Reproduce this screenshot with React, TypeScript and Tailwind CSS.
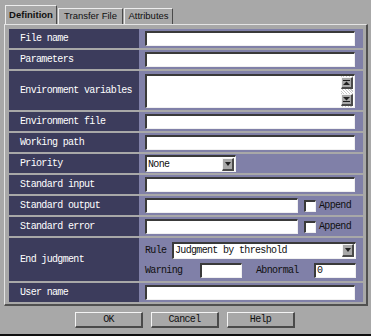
import React from 'react';

const mono = "font-['Liberation_Mono','DejaVu_Sans_Mono',monospace] text-[10px] tracking-[-0.67px]";

const sunken = 'border-t-2 border-l-2 border-t-[#3a3a3a] border-l-[#3a3a3a] border-b border-r border-b-[#f0f0f0] border-r-[#f0f0f0] bg-white';
const raised = 'border-t border-l border-t-[#f4f4f4] border-l-[#f4f4f4] border-b-2 border-r-2 border-b-[#4a4a4a] border-r-[#4a4a4a] bg-[#a8a8a8]';

const Label: React.FC<{ text: string }> = ({ text }) => (
  <div className={`w-[130px] shrink-0 bg-[#3c3c5c] flex items-center pl-[11px] text-white ${mono}`}>
    {text}
  </div>
);

const Row: React.FC<{ label: string; h?: string; children: React.ReactNode }> = ({ label, h = 'h-[19px]', children }) => (
  <div className={`flex ${h}`}>
    <Label text={label} />
    <div className="flex-1 bg-[#8080a8] flex items-center pl-[6px] pr-[8px]">{children}</div>
  </div>
);

const Input: React.FC<{ w?: string; value?: string }> = ({ w = 'flex-1', value }) => (
  <div className={`${w} h-[15px] ${sunken} flex items-center pl-[1px] text-[#101010] ${mono}`}>{value}</div>
);

const Select: React.FC<{ w: string; value: string }> = ({ w, value }) => (
  <div className={`${w} h-[17px] ${sunken} flex items-center justify-between pl-[1px] pr-[1px] text-[#101010] ${mono}`}>
    <span>{value}</span>
    <div className={`w-[12px] h-[13px] ${raised} flex items-center justify-center`}>
      <svg width="6" height="4" viewBox="0 0 6 4">
        <polygon points="0,0 6,0 3,4" fill="#202020" />
      </svg>
    </div>
  </div>
);

const Checkbox = () => <div className={`w-[12px] h-[12px] ml-[6px] ${sunken}`} />;

const Dark: React.FC<{ className?: string; children: React.ReactNode }> = ({ className = '', children }) => (
  <span className={`${className} text-[#101010] ${mono}`}>{children}</span>
);

export default function App() {
  const tabText = "font-['Liberation_Sans',Arial,sans-serif] text-[9.5px] text-[#101010]";
  const tabBorder = 'border-t border-l border-[#ececec] border-r border-r-[#4a4a4a]';
  return (
    <div className="w-[371px] h-[336px] bg-[#a8a8a8] border-b-2 border-[#101010] flex flex-col overflow-hidden">
      <div className="flex items-end pl-[5px] pt-[5px] h-[24px]">
        <div className={`w-[52px] h-[19px] ${tabBorder} flex items-center justify-center font-bold ${tabText}`}>
          Definition
        </div>
        <div className={`w-[65px] h-[16px] ml-[1px] ${tabBorder} flex items-center justify-center ${tabText}`}>
          Transfer File
        </div>
        <div className={`w-[49px] h-[16px] ml-[1px] ${tabBorder} flex items-center justify-center ${tabText}`}>
          Attributes
        </div>
      </div>
      <div className="mx-[4px] w-[364px] h-[282px] border-t border-l border-[#e4e4e4] border-r-2 border-b-2 border-r-[#505050] border-b-[#505050] pt-[4px] pl-[4px] pr-[3px] flex flex-col gap-[2px]">
        <Row label="File name"><Input /></Row>
        <Row label="Parameters"><Input /></Row>
        <Row label="Environment variables" h="h-[39px]">
          <div className={`flex-1 h-[34px] ${sunken} flex justify-end pr-[1px]`}>
            <div className="w-[12px] flex flex-col justify-between py-[1px] bg-[repeating-linear-gradient(45deg,#ffffff_0px,#ffffff_1px,#c8c8c8_1px,#c8c8c8_2px)]">
              <div className={`h-[12px] ${raised} flex items-center justify-center`}>
                <svg width="7" height="5" viewBox="0 0 7 5">
                  <rect x="0" y="0" width="7" height="1" fill="#202020" />
                  <polygon points="0,5 7,5 3.5,1.5" fill="#202020" />
                </svg>
              </div>
              <div className={`h-[12px] ${raised} flex items-center justify-center`}>
                <svg width="7" height="5" viewBox="0 0 7 5">
                  <polygon points="0,0 7,0 3.5,3.5" fill="#202020" />
                  <rect x="0" y="4" width="7" height="1" fill="#202020" />
                </svg>
              </div>
            </div>
          </div>
        </Row>
        <Row label="Environment file"><Input /></Row>
        <Row label="Working path"><Input /></Row>
        <Row label="Priority"><Select w="w-[91px]" value="None" /></Row>
        <Row label="Standard input"><Input /></Row>
        <Row label="Standard output">
          <Input w="w-[153px]" />
          <Checkbox />
          <Dark className="ml-[3px]">Append</Dark>
        </Row>
        <Row label="Standard error">
          <Input w="w-[153px]" />
          <Checkbox />
          <Dark className="ml-[3px]">Append</Dark>
        </Row>
        <div className="flex h-[43px]">
          <Label text="End judgment" />
          <div className="flex-1 bg-[#8080a8] flex flex-col justify-center gap-[4px] pl-[6px] pr-[7px]">
            <div className="flex items-center">
              <Dark className="w-[27px]">Rule</Dark>
              <Select w="flex-1" value="Judgment by threshold" />
            </div>
            <div className="flex items-center">
              <Dark className="w-[55px]">Warning</Dark>
              <Input w="w-[42px]" />
              <Dark className="ml-[14px] w-[58px]">Abnormal</Dark>
              <Input w="flex-1" value="0" />
            </div>
          </div>
        </div>
        <Row label="User name"><Input /></Row>
      </div>
      <div className="flex pl-[75px] gap-[8px] mt-[6px]">
        {['OK', 'Cancel', 'Help'].map((b) => (
          <div key={b} className={`w-[68px] h-[16px] ${raised} flex items-center justify-center text-[#101010] ${mono}`}>
            {b}
          </div>
        ))}
      </div>
    </div>
  );
}
